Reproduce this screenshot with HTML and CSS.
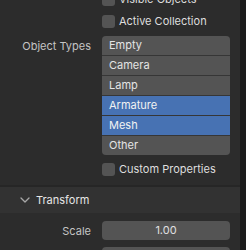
FILE: index.html
```html
<!DOCTYPE html>
<html lang="en">
<head>
    <meta charset="UTF-8">
    <title>Export Properties</title>
    <link rel="stylesheet" href="styles.css">
</head>
<body>
<div class="editor">
    <div class="region">
        <section class="panel panel-include">
            <div class="prop-row">
                <span class="label"></span>
                <label class="check"><span class="box"></span>Visible Objects</label>
            </div>
            <div class="prop-row">
                <span class="label"></span>
                <label class="check"><span class="box"></span>Active Collection</label>
            </div>
            <div class="prop-row list-row">
                <span class="label">Object Types</span>
                <ul class="enum-list">
                    <li>Empty</li>
                    <li>Camera</li>
                    <li>Lamp</li>
                    <li class="selected">Armature</li>
                    <li class="selected">Mesh</li>
                    <li>Other</li>
                </ul>
            </div>
            <div class="prop-row">
                <span class="label"></span>
                <label class="check"><span class="box"></span>Custom Properties</label>
            </div>
        </section>
        <section class="panel">
            <div class="panel-header">
                <svg class="chevron" width="10" height="6" viewBox="0 0 10 6">
                    <path d="M1 1 L5 5 L9 1" fill="none" stroke="#a8a8a8" stroke-width="1.3" stroke-linecap="round" stroke-linejoin="round"/>
                </svg>
                <span>Transform</span>
            </div>
            <div class="panel-body">
                <div class="prop-row">
                    <span class="label">Scale</span>
                    <div class="field">1.00</div>
                </div>
                <div class="prop-row">
                    <span class="label"></span>
                    <div class="field"></div>
                </div>
            </div>
        </section>
    </div>
    <div class="strip"></div>
</div>
</body>
</html>
```

FILE: styles.css
```css
html, body {
    margin: 0;
    height: 100%;
    overflow: hidden;
}

body {
    font: 11px/1 "Inter", "Noto Sans", sans-serif;
    color: #e0e0e0;
    background: #2a2a2a;
}

.editor {
    display: flex;
    height: 250px;
}

.region {
    flex: 1;
    display: flex;
    flex-direction: column;
    gap: 2px;
    background: #262626;
}

.strip {
    width: 6px;
    background: #1c1c1c;
}

.panel {
    background: #2c2c2c;
}

.panel-include {
    display: flex;
    flex-direction: column;
    margin-top: -11px;
    padding-bottom: 6px;
}

.panel-include > .prop-row + .prop-row {
    margin-top: 2px;
}

.panel-include > .list-row {
    margin-top: 5px !important;
}

.panel-include > .list-row + .prop-row {
    margin-top: 4px !important;
}

.prop-row {
    display: grid;
    grid-template-columns: 91px 128px;
    column-gap: 11px;
    align-items: start;
}

.label {
    height: 20px;
    line-height: 20px;
    text-align: right;
    color: #c4c4c4;
}

.check {
    display: flex;
    align-items: center;
    gap: 4px;
    height: 20px;
    color: #dedede;
    white-space: nowrap;
}

.box {
    width: 13px;
    height: 13px;
    border-radius: 3px;
    background: #545454;
}

.enum-list {
    display: flex;
    flex-direction: column;
    gap: 1px;
    margin: 0;
    padding: 0;
    list-style: none;
    background: #363636;
    border-radius: 4px;
    overflow: hidden;
}

.enum-list > li {
    height: 19px;
    line-height: 19px;
    padding-left: 7px;
    background: #545454;
    color: #e4e4e4;
}

.enum-list > li.selected {
    background: #4772b3;
    color: #f2f2f2;
}

.panel-header {
    display: flex;
    align-items: center;
    gap: 6px;
    height: 26px;
    padding-left: 20px;
    background: #323232;
    color: #e6e6e6;
}

.chevron {
    display: block;
}

.panel-body {
    display: flex;
    flex-direction: column;
    gap: 6px;
    padding-top: 8px;
}

.field {
    height: 19px;
    line-height: 19px;
    border-radius: 4px;
    background: #545454;
    text-align: center;
    color: #e0e0e0;
}
```
